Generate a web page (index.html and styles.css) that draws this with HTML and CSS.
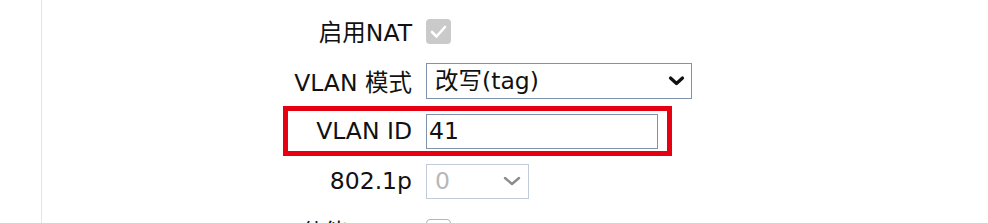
FILE: index.html
```html
<!DOCTYPE html>
<html lang="zh-CN">
<head>
  <meta charset="UTF-8" />
  <meta name="viewport" content="width=device-width, initial-scale=1.0"/>
  <title>VLAN 设置</title>
  <link rel="stylesheet" href="styles.css">
</head>
<body>
  <div class="page">
    <form class="form">
      <div class="row">
        <label class="label">启用NAT</label>
        <span class="check checked" aria-checked="true">
          <svg width="25" height="25" viewBox="0 0 25 25"><path d="M6 13 L10.5 17.5 L19 8" fill="none" stroke="#fff" stroke-width="2.6" stroke-linecap="round" stroke-linejoin="round"/></svg>
        </span>
      </div>

      <div class="row">
        <label class="label">VLAN 模式</label>
        <div class="select wide">
          <select>
            <option>改写(tag)</option>
            <option>透传</option>
          </select>
          <svg class="chev" width="17" height="11" viewBox="0 0 17 11"><path d="M2.5 2.5 L8.5 8 L14.5 2.5" fill="none" stroke="#111" stroke-width="3.2" stroke-linecap="round" stroke-linejoin="round"/></svg>
        </div>
      </div>

      <div class="row mark">
        <label class="label">VLAN ID</label>
        <input class="text" type="text" value="41">
      </div>

      <div class="row">
        <label class="label">802.1p</label>
        <div class="select small off">
          <select disabled>
            <option>0</option>
          </select>
          <svg class="chev" width="18" height="10" viewBox="0 0 18 10"><path d="M2 2 L9 8 L16 2" fill="none" stroke="#8c8c8c" stroke-width="2.4" stroke-linecap="round" stroke-linejoin="round"/></svg>
        </div>
      </div>

      <div class="row">
        <label class="label">使能DSCP</label>
        <span class="check"></span>
      </div>
    </form>
  </div>
</body>
</html>
```

FILE: styles.css
```css
body {
  margin: 0;
  background: #fff;
  font-family: "DejaVu Sans", Verdana, "Noto Sans CJK SC", sans-serif;
  font-size: 23.5px;
  color: #111;
  overflow: hidden;
}

.page {
  margin-left: 41px;
  border-left: 1px solid #e4e4e4;
  min-height: 100vh;
}

.form {
  padding-top: 6px;
}

.row {
  display: flex;
  align-items: center;
  height: 50px;
}

.label {
  width: 370px;
  margin-right: 14px;
  text-align: right;
  white-space: nowrap;
}

/* red highlight round the VLAN ID row */
.mark {
  position: relative;
}

.mark::after {
  content: "";
  position: absolute;
  left: 241px;
  top: 0;
  width: 389px;
  height: 50px;
  box-sizing: border-box;
  border: 5px solid #e60012;
  pointer-events: none;
}

.check {
  display: inline-block;
  width: 25px;
  height: 25px;
  box-sizing: border-box;
  border-radius: 4px;
  border: 1px solid #b5b5b5;
  background: #fff;
}

.check.checked {
  border: none;
  background: #cacaca;
}

.check svg {
  display: block;
}

.select {
  position: relative;
  height: 36px;
}

.select select {
  appearance: none;
  -webkit-appearance: none;
  width: 100%;
  height: 100%;
  margin: 0;
  padding: 0 0 0 8px;
  border: 1px solid #7f93ad;
  border-radius: 0;
  background: #fff;
  font: inherit;
  color: #111;
}

.select .chev {
  position: absolute;
  top: 50%;
  right: 7px;
  transform: translateY(-50%);
  pointer-events: none;
}

.wide {
  width: 266px;
}

.small {
  width: 103px;
  height: 35px;
}

.off select {
  border-color: #a9b7ca;
  color: #9a9a9a;
}

.off .chev {
  right: 8px;
}

.text {
  width: 232px;
  height: 35px;
  box-sizing: border-box;
  margin: 0;
  padding: 0 2px;
  border: 1px solid #7f93ad;
  border-radius: 0;
  font: inherit;
  color: #111;
  outline: none;
}
```
